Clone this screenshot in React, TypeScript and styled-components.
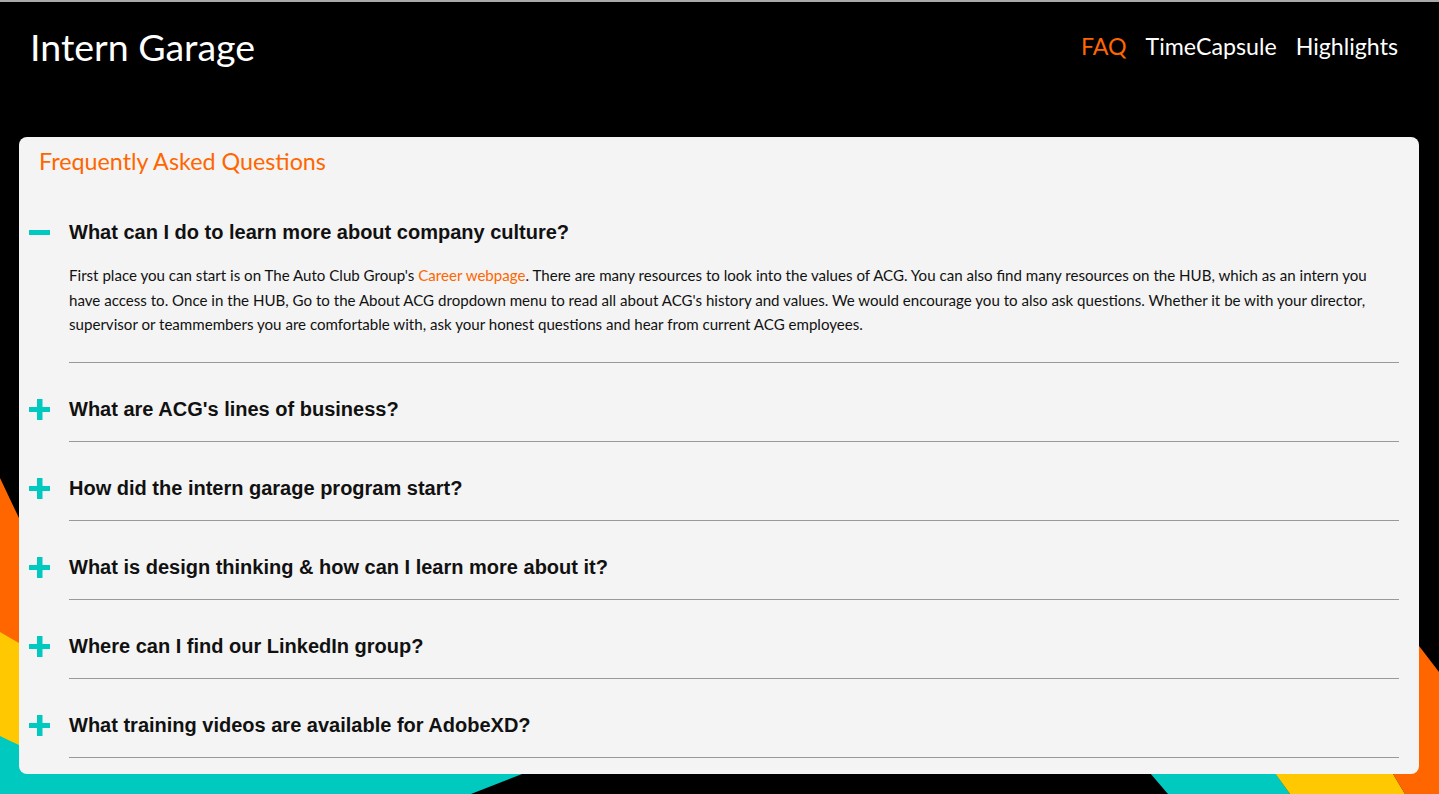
import React from "react";
import styled, { createGlobalStyle } from "styled-components";

const GlobalStyle = createGlobalStyle`
  html, body { margin: 0; padding: 0; background: #000; }
  body { font-family: "Lato", "Open Sans", sans-serif; overflow: hidden; }
  * { box-sizing: border-box; }
`;

const ORANGE = "#ff6600";
const TEAL = "#00c9bf";
const YELLOW = "#ffc800";

const Page = styled.div`
  position: relative;
  width: 1439px;
  height: 794px;
  background: #000;
  border-top: 2px solid #a9a9a9;
  overflow: hidden;
  display: flex;
  flex-direction: column;
`;

const Backdrop = styled.svg`
  position: absolute;
  left: 0;
  top: -2px;
  width: 1439px;
  height: 794px;
  z-index: 0;
`;

const Header = styled.header`
  position: relative;
  z-index: 1;
  height: 90px;
  display: flex;
  align-items: center;
  justify-content: space-between;
  padding: 0 41px 0 30px;
`;

const Title = styled.h1`
  margin: 0 0 2px;
  color: #fff;
  font-family: "Lato", sans-serif;
  font-weight: 400;
  font-size: 37.5px;
`;

const Nav = styled.nav`
  display: flex;
  gap: 19px;
  align-items: center;
  margin-bottom: 2px;
`;

const NavLink = styled.a<{ $active?: boolean }>`
  color: ${(p) => (p.$active ? ORANGE : "#fff")};
  font-family: "Lato", sans-serif;
  font-size: 23.2px;
  text-decoration: none;
`;

const Main = styled.main`
  position: relative;
  z-index: 1;
  padding: 45px 20px 0 19px;
`;

const Card = styled.section`
  background: #f4f4f4;
  border-radius: 8px;
  padding: 9px 20px 16px 0;
`;

const Heading = styled.h2`
  margin: 0 0 0 20px;
  color: ${ORANGE};
  font-family: "Lato", sans-serif;
  font-weight: 400;
  font-size: 23.3px;
  line-height: 30px;
  height: 40px;
`;

const Item = styled.div`
  display: flex;
`;

const IconCol = styled.div`
  width: 50px;
  flex: none;
  padding: 36px 0 0 10px;
`;

const Body = styled.div`
  flex: 1;
  padding: 34px 0 20px;
  border-bottom: 1px solid #999;
`;

const Question = styled.h3`
  margin: 0;
  font-family: "Liberation Sans", Arial, sans-serif;
  font-weight: 700;
  font-size: 20px;
  line-height: 24px;
  color: #111;
`;

const Answer = styled.p`
  margin: 0;
  padding: 19px 0 5px;
  font-family: "Lato", sans-serif;
  font-size: 15.1px;
  line-height: 24.5px;
  color: #111;
`;

const Link = styled.a`
  color: ${ORANGE};
  text-decoration: none;
`;

const Toggle = ({ open }: { open: boolean }) => (
  <svg width="21" height="21" viewBox="0 0 21 21">
    <rect x="0" y="8" width="21" height="5" fill={TEAL} />
    {!open && <rect x="8" y="0" width="5.5" height="21" fill={TEAL} />}
  </svg>
);

const faqs = [
  { q: "What can I do to learn more about company culture?", open: true },
  { q: "What are ACG's lines of business?" },
  { q: "How did the intern garage program start?" },
  { q: "What is design thinking & how can I learn more about it?" },
  { q: "Where can I find our LinkedIn group?" },
  { q: "What training videos are available for AdobeXD?" },
];

export default function App() {
  return (
    <>
      <GlobalStyle />
      <Page>
        <Backdrop viewBox="0 0 1439 794">
          <path d="M0,478 Q8,495 19,518 L120,720 L0,720 Z" fill={ORANGE} />
          <path d="M0,632 Q10,638 19,643 L200,700 L200,760 L0,760 Z" fill={YELLOW} />
          <path d="M0,736 Q10,741 19,745 L100,755 L558,760 L471,794 L0,794 Z" fill={TEAL} />
          <path d="M1120,738 L1251,738 L1290,794 L1168,794 Z" fill={TEAL} />
          <path d="M1240,724 L1370,735 L1405,794 L1290,794 Z" fill={YELLOW} />
          <path d="M1380,595 L1439,672 L1439,794 L1405,794 L1340,685 Z" fill={ORANGE} />
        </Backdrop>
        <Header>
          <Title>Intern Garage</Title>
          <Nav>
            <NavLink $active href="#">FAQ</NavLink>
            <NavLink href="#">TimeCapsule</NavLink>
            <NavLink href="#">Highlights</NavLink>
          </Nav>
        </Header>
        <Main>
          <Card>
            <Heading>Frequently Asked Questions</Heading>
            {faqs.map((f) => (
              <Item key={f.q}>
                <IconCol>
                  <Toggle open={!!f.open} />
                </IconCol>
                <Body>
                  <Question>{f.q}</Question>
                  {f.open && (
                    <Answer>
                      First place you can start is on The Auto Club Group's{" "}
                      <Link href="#">Career webpage</Link>. There are many resources to look into the
                      values of ACG. You can also find many resources on the HUB, which as an intern you
                      have access to. Once in the HUB, Go to the About ACG dropdown menu to read all about
                      ACG's history and values. We would encourage you to also ask questions. Whether it be
                      with your director, supervisor or teammembers you are comfortable with, ask your
                      honest questions and hear from current ACG employees.
                    </Answer>
                  )}
                </Body>
              </Item>
            ))}
          </Card>
        </Main>
      </Page>
    </>
  );
}
